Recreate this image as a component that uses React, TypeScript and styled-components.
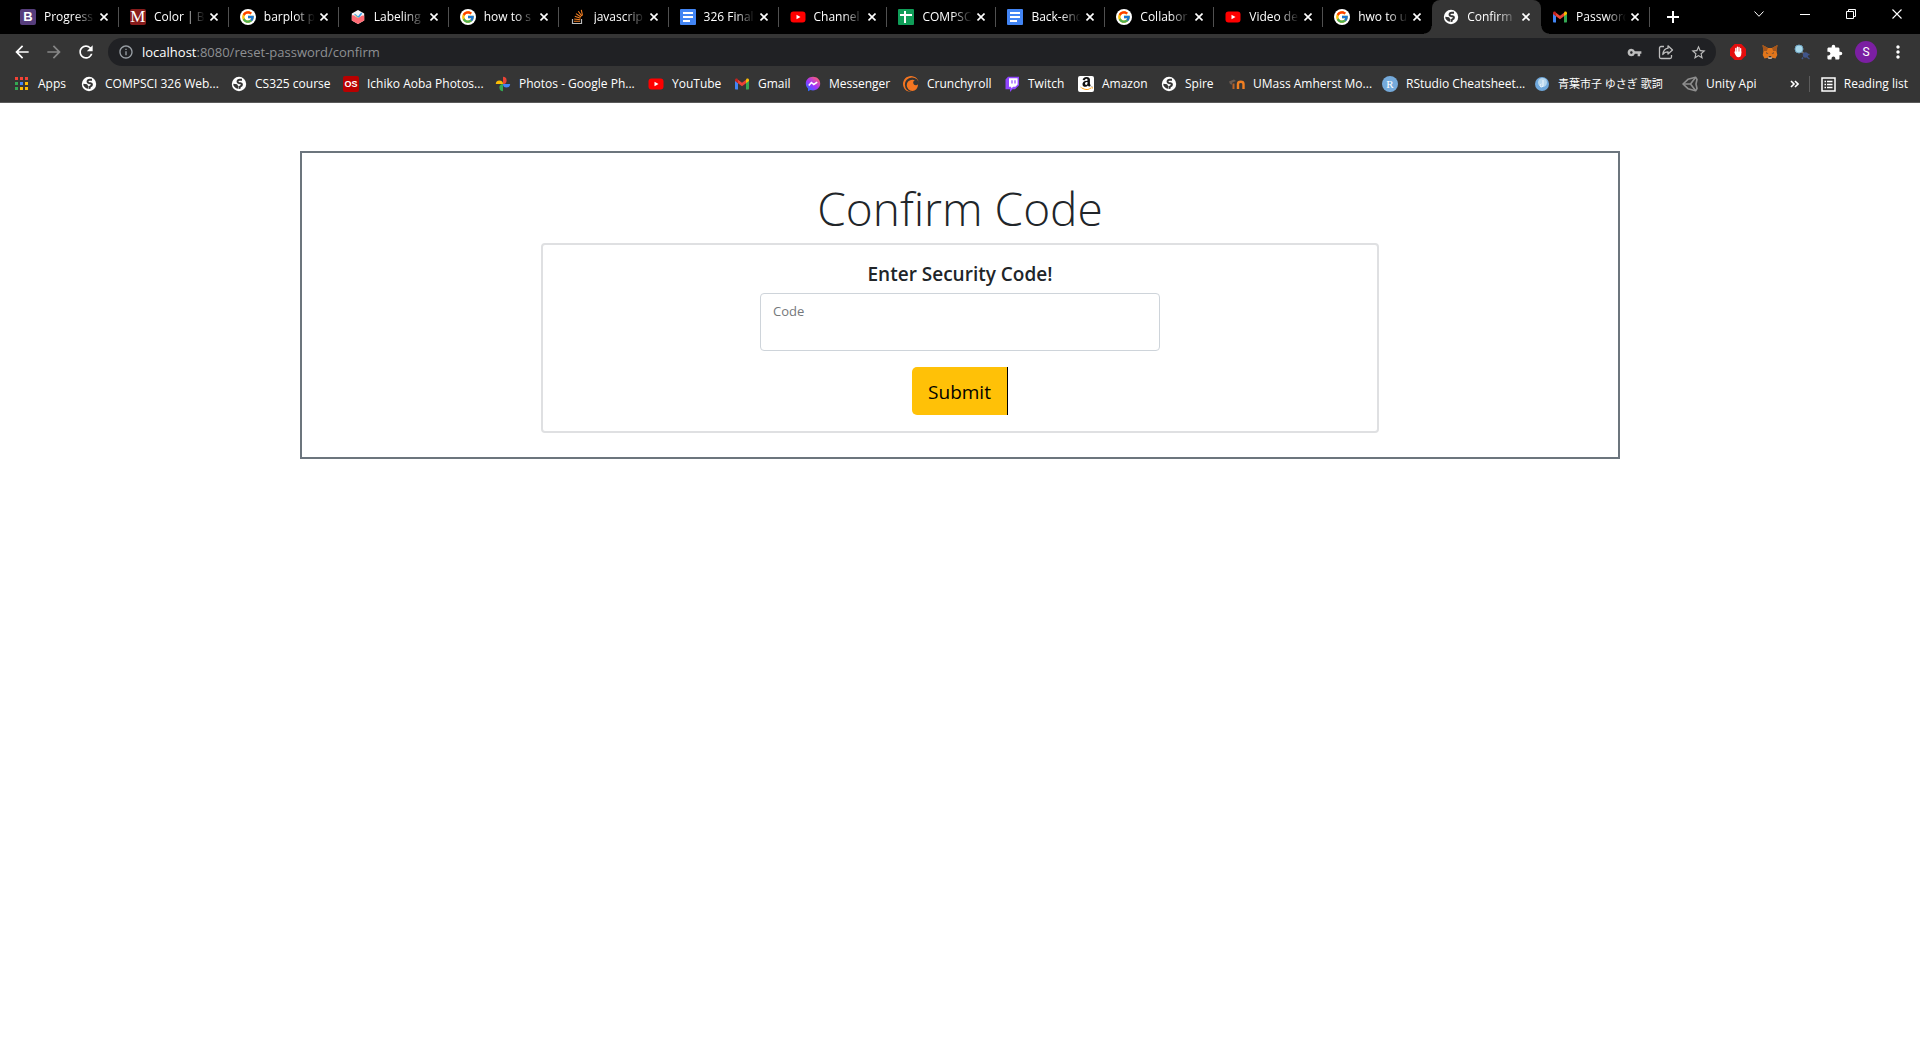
import React from 'react';
import styled, { createGlobalStyle } from 'styled-components';
import { FcGoogle } from 'react-icons/fc';
import { FaAmazon } from 'react-icons/fa';
import {
  MdArrowBack,
  MdArrowForward,
  MdExtension,
  MdInfoOutline,
  MdMoreVert,
  MdRefresh,
  MdStarBorder,
  MdVpnKey,
} from 'react-icons/md';
import { SiCrunchyroll } from 'react-icons/si';

const GlobalStyle = createGlobalStyle`
  *, *::before, *::after { box-sizing: border-box; }
  body {
    margin: 0;
    background: #fff;
    color: #212529;
    font-family: "Open Sans", "Noto Sans", "Noto Sans CJK JP", sans-serif;
    font-size: 16px;
  }
  button { font-family: inherit; border: 0; padding: 0; background: none; color: inherit; }
  svg { display: block; flex: none; }
`;

/* ---------- browser chrome ---------- */

const Chrome = styled.header`
  background: #353535;
  color: #fff;
  font-size: 12px;
  border-bottom: 1px solid #5a5a5a;
`;

const TabStrip = styled.div`
  display: flex;
  height: 34px;
  padding-left: 9px;
  background: #000;
`;

const Tabs = styled.div`
  display: grid;
  flex: 1;
  grid-template-columns: repeat(7, minmax(0, 110fr)) repeat(8, minmax(0, 109fr));
  min-width: 0;
`;

const Tab = styled.div<{ $active?: boolean; $divider?: boolean }>`
  display: flex;
  min-width: 0;
  align-items: center;
  padding: 0 10px 0 11px;
  position: relative;
  background: ${(p) => (p.$active ? '#353535' : 'transparent')};
  border-radius: 8px 8px 0 0;

  &::before, &::after {
    content: '';
    display: ${(p) => (p.$active ? 'block' : 'none')};
    position: absolute;
    bottom: 0;
    width: 8px;
    height: 8px;
  }
  &::before {
    left: -8px;
    background: radial-gradient(circle at 0 0, transparent 7px, #353535 8px);
  }
  &::after {
    right: -8px;
    background: radial-gradient(circle at 100% 0, transparent 7px, #353535 8px);
  }
  ${(p) =>
    p.$divider &&
    `&::after {
      display: block;
      right: 0;
      bottom: 7px;
      width: 1px;
      height: 20px;
      background: #505050;
    }`}
`;

const TabTitle = styled.span`
  flex: 1;
  min-width: 0;
  margin: 0 4px 0 8px;
  overflow: hidden;
  white-space: nowrap;
  line-height: 18px;
  mask-image: linear-gradient(to right, #000 60%, transparent);
`;

const CloseButton = styled.button`
  display: flex;
  width: 10px;
  height: 16px;
  align-items: center;
  justify-content: center;
`;

const StripButton = styled.button`
  display: flex;
  width: 46px;
  align-items: center;
  justify-content: center;
`;

const WindowControls = styled.div`
  display: flex;
  height: 28px;
  margin-left: 40px;
`;

const Toolbar = styled.div`
  display: flex;
  align-items: center;
  height: 36px;
  padding: 0 6px;
`;

const ToolButton = styled.button<{ $dim?: boolean }>`
  display: flex;
  width: 32px;
  height: 28px;
  align-items: center;
  justify-content: center;
  color: ${(p) => (p.$dim ? '#868686' : '#fff')};
`;

const Omnibox = styled.div`
  display: flex;
  flex: 1;
  align-items: center;
  height: 28px;
  margin: 0 6px;
  padding: 0 2px 0 10px;
  border-radius: 14px;
  background: #202124;
  color: #bdbdbd;
`;

const Url = styled.div`
  flex: 1;
  padding-left: 8px;
  font-size: 13px;
  line-height: 20px;
  color: #8e9093;
  b { font-weight: 400; color: #fff; }
`;

const Avatar = styled.span`
  display: flex;
  width: 22px;
  height: 22px;
  align-items: center;
  justify-content: center;
  border-radius: 50%;
  background: #7b1fa2;
  font-family: Roboto, sans-serif;
  font-size: 12px;
`;

const BookmarkBar = styled.nav`
  display: flex;
  align-items: center;
  height: 32px;
  padding: 0 12px 4px 14px;
`;

const BookmarkLink = styled.a`
  display: flex;
  align-items: center;
  gap: 8px;
  margin-right: 17px;
  color: #fff;
  text-decoration: none;
  white-space: nowrap;
`;

const BookmarkLabel = styled.span<{ $width: number; $cjk?: boolean }>`
  width: ${(p) => p.$width}px;
  font-size: ${(p) => (p.$cjk ? 11 : 12)}px;
  line-height: 18px;
`;

const BarEnd = styled.div`
  display: flex;
  align-items: center;
  margin-left: auto;
`;

const BarDivider = styled.span`
  width: 1px;
  height: 16px;
  margin: 0 11px 0 10px;
  background: #5c5c5c;
`;

const ReadingList = styled.button`
  display: flex;
  align-items: center;
  gap: 8px;
  font-size: 12px;
  line-height: 18px;
  white-space: nowrap;
`;

/* ---------- page ---------- */

const Page = styled.main`
  padding: 48px 24px;
`;

const Container = styled.section`
  display: flex;
  flex-direction: column;
  align-items: center;
  max-width: 1320px;
  margin: 0 auto;
  padding: 28px 0 24px;
  border: 2px solid #6c757d;
`;

const Title = styled.h1`
  margin: 0 0 8px;
  font-size: 46px;
  font-weight: 300;
  line-height: 54px;
`;

const Column = styled.div`
  width: 66.6667%;
  padding: 0 20px;
`;

const Form = styled.form`
  display: flex;
  flex-direction: column;
  align-items: center;
  padding: 16px;
  border: 2px solid #dfe0e2;
  border-radius: 4px;
`;

const FormHeading = styled.h2`
  margin: 0 0 6px;
  font-size: 19px;
  font-weight: 600;
  line-height: 26px;
`;

const Field = styled.div`
  position: relative;
  width: 100%;
  max-width: 400px;
  margin-bottom: 16px;
`;

const FieldLabel = styled.label`
  position: absolute;
  top: 8px;
  left: 13px;
  font-size: 13px;
  line-height: 20px;
  color: #75787b;
`;

const FieldInput = styled.input`
  display: block;
  width: 100%;
  height: 58px;
  padding: 26px 12px 10px;
  border: 1px solid #ced4da;
  border-radius: 4px;
  background: #fff;
  color: #212529;
  font: inherit;
`;

const SubmitButton = styled.button`
  height: 48px;
  padding: 2px 16px 0;
  border-right: 1px solid #000;
  border-radius: 5px 0 0 5px;
  background: #ffc107;
  color: #000;
  font-size: 19px;
  line-height: 30px;
`;

/* ---------- icons ---------- */

const Globe = () => (
  <svg width="16" height="16" viewBox="0 0 16 16">
    <circle cx="8" cy="8" r="7.2" fill="#fff" />
    <path
      d="M11 3.8H9C6.200 3.600 5.800 6.400 7.800 6.900L9.500 7.200C11.600 7.600 11.200 9.800 9.600 10.200 8.600 10.500 8.600 11.500 8.400 12.800"
      stroke="#353535"
      strokeWidth="2"
      fill="none"
    />
    <path d="M2.200 7.800L6 8.300 7.400 10.200 7 12.800 5 12.200C3.400 11.200 2.400 9.800 2.200 7.800z" fill="#353535" />
  </svg>
);

const GoogleIcon = () => (
  <svg width="16" height="16" viewBox="0 0 16 16">
    <circle cx="8" cy="8" r="8" fill="#fff" />
    <FcGoogle x="1" y="1" size={14} />
  </svg>
);

const YouTube = () => (
  <svg width="16" height="16" viewBox="0 0 16 16">
    <rect x="0.5" y="2.5" width="15" height="11" rx="3" fill="#f00" />
    <path d="M6.5 5.7v4.6L10.5 8z" fill="#fff" />
  </svg>
);

const GmailIcon = () => (
  <svg width="16" height="16" viewBox="0 0 16 16">
    <path d="M1 4.5v8.3c0 .4.3.7.7.7H4V7z" fill="#4285f4" />
    <path d="M15 4.5v8.3c0 .4-.3.7-.7.7H12V7z" fill="#34a853" />
    <path d="M12 3.8V7.2l3-2.2V4c0-1.5-1.6-2-2.5-1.2z" fill="#fbbc04" />
    <path d="M4 3.8L8 6.8l4-3v3.4L8 10.3 4 7.2z" fill="#ea4335" />
    <path d="M1 4v1l3 2.2V3.8L3.5 2.8C2.5 2 1 2.5 1 4z" fill="#c5221f" />
  </svg>
);

const DocIcon = () => (
  <svg width="16" height="16" viewBox="0 0 16 16">
    <rect width="16" height="16" rx="1" fill="#4285f4" />
    <path d="M3 4h10M3 8h10M3 12h7" stroke="#fff" strokeWidth="2" />
  </svg>
);

const SheetIcon = () => (
  <svg width="16" height="16" viewBox="0 0 16 16">
    <rect width="16" height="16" rx="1" fill="#0f9d58" />
    <path d="M2 6h12M7 2v12" stroke="#fff" strokeWidth="2" />
  </svg>
);

const LetterTile = styled.span<{ $bg: string; $size: number; $serif?: boolean; $round?: boolean; $bold?: boolean }>`
  display: flex;
  flex: none;
  width: 16px;
  height: 16px;
  align-items: center;
  justify-content: center;
  border-radius: ${(p) => (p.$round ? '50%' : '2px')};
  background: ${(p) => p.$bg};
  color: #fff;
  font-family: ${(p) => (p.$serif ? '"Liberation Serif", serif' : '"Liberation Sans", sans-serif')};
  font-size: ${(p) => p.$size}px;
  font-weight: ${(p) => (p.$bold ? 700 : 400)};
  line-height: 16px;
`;

const ChartIcon = () => (
  <svg width="16" height="16" viewBox="0 0 16 16">
    <path d="M8 1l6.2 3.500v7L8 15l-6.200-3.500v-7z" fill="#f4f4f4" />
    <path d="M1.800 6.500C4 5 5.500 8.500 8 8.500S11.500 5.500 14.200 6.800v4.700L8 15l-6.200-3.500z" fill="#ff6b74" />
    <path d="M4.500 5.500C6 5.500 6.500 8 8 8s2.500-3.500 3.800-3.800" stroke="#36a2eb" strokeWidth="1.600" fill="none" />
    <path d="M5 6.500C6.300 6.500 7 8.700 8.300 8.700" stroke="#ffcd56" strokeWidth="1" fill="none" />
  </svg>
);

const StackIcon = () => (
  <svg width="16" height="16" viewBox="0 0 16 16">
    <path d="M2.500 10v4.500h9V10" stroke="#bcbbbb" strokeWidth="1.200" fill="none" />
    <path d="M4 12.300h6M4.200 10l6 .7M4.800 7.300l5.700 1.900M6 4.600l5 3.400M8.300 2.300l3.500 4.800M11.300.8l1.200 5.700" stroke="#f48024" strokeWidth="1.100" />
  </svg>
);

const AppsIcon = () => {
  const colors = ['#f44336', '#f44336', '#f44336', '#34a853', '#4285f4', '#fbbc04', '#34a853', '#fbbc04', '#fbbc04'];
  return (
    <svg width="16" height="16" viewBox="0 0 16 16">
      {colors.map((c, i) => (
        <rect key={i} x={1 + (i % 3) * 5} y={1 + Math.floor(i / 3) * 5} width="3" height="3" fill={c} />
      ))}
    </svg>
  );
};

const PhotosIcon = () => (
  <svg width="16" height="16" viewBox="0 0 16 16">
    <path d="M8 .8a3.600 3.600 0 0 1 0 7.200z" fill="#ea4335" />
    <path d="M15.200 8a3.600 3.600 0 0 1-7.200 0z" fill="#4285f4" />
    <path d="M8 15.200a3.600 3.600 0 0 1 0-7.200z" fill="#34a853" />
    <path d="M.8 8a3.600 3.600 0 0 1 7.200 0z" fill="#fbbc04" />
  </svg>
);

const MessengerIcon = () => (
  <svg width="16" height="16" viewBox="0 0 16 16">
    <defs>
      <linearGradient id="messenger" x1="0" y1="1" x2="0.8" y2="0">
        <stop offset="0" stopColor="#0a7cff" />
        <stop offset="0.5" stopColor="#a033ff" />
        <stop offset="1" stopColor="#ff6070" />
      </linearGradient>
    </defs>
    <path d="M8 .8C3.900.8.8 3.700.8 7.600c0 2 .8 3.800 2.200 5v2.600l2.400-1.200c.8.200 1.700.4 2.600.4 4.100 0 7.200-2.900 7.200-6.800S12.100.8 8 .8z" fill="url(#messenger)" />
    <path d="M3.800 9.500L6.400 6.500l2.400 2 3.400-2.300" stroke="#fff" strokeWidth="1.600" fill="none" />
  </svg>
);

const AmazonIcon = () => (
  <svg width="16" height="16" viewBox="0 0 16 16">
    <defs>
      <linearGradient id="amazon" x1="0" y1="0" x2="0" y2="1">
        <stop offset="0.73" stopColor="#111" />
        <stop offset="0.74" stopColor="#f90" />
      </linearGradient>
    </defs>
    <rect width="16" height="16" rx="2" fill="#fff" />
    <FaAmazon x="1" y="0" size={15} fill="url(#amazon)" />
  </svg>
);

const TwitchIcon = () => (
  <svg width="16" height="16" viewBox="0 0 16 16">
    <path d="M4 0.8h11v8.500l-4 4H8.500L6 16v-2.700H1.500V3.500z" fill="#9146ff" />
    <path d="M5 2.200h8.600v6.400l-2.200 2.200H9.200L7.200 12.600v-1.800H5z" fill="#fff" />
    <path d="M8 4.300v3.200M11 4.300v3.200" stroke="#9146ff" strokeWidth="1.200" />
  </svg>
);

const MoodleIcon = () => (
  <svg width="16" height="16" viewBox="0 0 16 16">
    <path d="M0 5.500l5-2 2 1.500-4 1.700v2L1 8z" fill="#6a5a50" />
    <path d="M4.500 13V7.500" stroke="#b9622a" strokeWidth="2" />
    <path d="M9 13V8c0-3 5.500-3 5.500 0v5" stroke="#f07f22" strokeWidth="2.400" fill="none" />
  </svg>
);

const OrbIcon = () => (
  <svg width="16" height="16" viewBox="0 0 16 16">
    <circle cx="8" cy="8" r="7" fill="#6fa8dc" />
    <circle cx="8.500" cy="6.500" r="4.500" fill="#b7d7ee" />
    <path d="M9 4v5a1.500 1.500 0 1 1-1.500-1" stroke="#eef7ff" strokeWidth="1" fill="none" />
  </svg>
);

const UnityIcon = () => (
  <svg width="16" height="16" viewBox="0 0 16 16" fill="none" stroke="#8f8f8f" strokeWidth="1.600" strokeLinejoin="round">
    <path d="M1 8L6 3.300 13.600 1.200 15 3.500 14 8l1 4.500-1.400 2.300L6 12.700z" />
    <path d="M1.500 8H8.500M8.500 8L13.500 1.500M8.500 8l5 6.500" />
  </svg>
);

const ShareIcon = () => (
  <svg width="16" height="16" viewBox="0 0 16 16" fill="none" stroke="#bdbdbd" strokeWidth="1.300" strokeLinejoin="round">
    <path d="M6 2.500H3A1.500 1.500 0 0 0 1.500 4v9A1.500 1.500 0 0 0 3 14.500h9a1.500 1.500 0 0 0 1.500-1.500v-2" />
    <path d="M10 1.800L14.500 6 10 10V7.800C7.500 7.800 6 8.600 4.800 10.500 5.200 7.200 7 4.600 10 4.200z" />
  </svg>
);

const BlockerIcon = () => (
  <svg width="16" height="16" viewBox="0 0 16 16">
    <path d="M4.700 0h6.600L16 4.700v6.600L11.300 16H4.700L0 11.300V4.700z" fill="#e40d0d" />
    <path d="M5.800 8V4.500M7.400 7.500V3.200M9 7.500V3.400M10.600 8.500V4.600" stroke="#fff" strokeWidth="1.300" strokeLinecap="round" />
    <path d="M4.200 7.800L5.200 7.500h6.100V10c0 2-1.200 3.300-2.900 3.300S5.400 11.500 4.200 7.800z" fill="#fff" />
  </svg>
);

const FoxIcon = () => (
  <svg width="16" height="16" viewBox="0 0 16 16">
    <path d="M.5 1L6 4h4l5.500-3-1 6 .8 4-1.800 3.500-3-.7L9 15H7l-1.500-1.200-3 .7L.7 11l.8-4z" fill="#e2761b" />
    <path d="M.5 1L6 4 4.800 7 1.500 7zM15.500 1L10 4l1.200 3 3.300 0z" fill="#a4561c" />
    <path d="M4 8.200l2.500 1.400H4.500zM12 8.200L9.500 9.600h2z" fill="#233447" />
    <path d="M6.200 12.500h3.600l.4 1.500L9 15H7l-1.200-1z" fill="#c0ad9e" />
    <path d="M6.800 12.200h2.400l.3 1h-3z" fill="#161616" />
  </svg>
);

const LensIcon = () => (
  <svg width="16" height="16" viewBox="0 0 16 16">
    <circle cx="5" cy="5" r="4" fill="#a8d8ea" stroke="#6fa3c0" strokeWidth="1" />
    <path d="M8 8l2.500 2" stroke="#777" strokeWidth="1.500" />
    <circle cx="11.500" cy="11" r="2.700" fill="#41558a" />
    <path d="M9 13.500l-1 1.500M13 13l2.500 2M13.500 10.500h2" stroke="#41558a" strokeWidth="1.400" />
  </svg>
);

const CloseIcon = ({ size = 8, weight = 1.6 }: { size?: number; weight?: number }) => (
  <svg width={size} height={size} viewBox={`0 0 ${size} ${size}`}>
    <path d={`M.5.5L${size - 0.5} ${size - 0.5}M${size - 0.5} .5L.5 ${size - 0.5}`} stroke="#fff" strokeWidth={weight} />
  </svg>
);

const ListIcon = () => (
  <svg width="15" height="15" viewBox="0 0 15 15" fill="none" stroke="#fff">
    <rect x="1" y="1" width="13" height="13" strokeWidth="1.500" />
    <path d="M3.500 4.500h1.500M6 4.500h5.500M3.500 7.500h1.500M6 7.500h5.500M3.500 10.500h1.500M6 10.500h5.500" strokeWidth="1.400" />
  </svg>
);

/* ---------- data ---------- */

const tabs: { icon: React.ReactNode; title: string; active?: boolean; beforeActive?: boolean }[] = [
  { icon: <LetterTile $bg="#563d7c" $size={13} $bold>B</LetterTile>, title: 'Progress' },
  { icon: <LetterTile $bg="#881c1c" $size={17} $serif>M</LetterTile>, title: 'Color | B' },
  { icon: <GoogleIcon />, title: 'barplot p' },
  { icon: <ChartIcon />, title: 'Labeling' },
  { icon: <GoogleIcon />, title: 'how to s' },
  { icon: <StackIcon />, title: 'javascrip' },
  { icon: <DocIcon />, title: '326 Final' },
  { icon: <YouTube />, title: 'Channel' },
  { icon: <SheetIcon />, title: 'COMPSC' },
  { icon: <DocIcon />, title: 'Back-end' },
  { icon: <GoogleIcon />, title: 'Collabor' },
  { icon: <YouTube />, title: 'Video de' },
  { icon: <GoogleIcon />, title: 'hwo to u', beforeActive: true },
  { icon: <Globe />, title: 'Confirm', active: true },
  { icon: <GmailIcon />, title: 'Password' },
];

const bookmarks: { icon: React.ReactNode; label: string; width: number; cjk?: boolean }[] = [
  { icon: <AppsIcon />, label: 'Apps', width: 26 },
  { icon: <Globe />, label: 'COMPSCI 326 Web...', width: 109 },
  { icon: <Globe />, label: 'CS325 course', width: 71 },
  { icon: <LetterTile $bg="#b90000" $size={9} $bold>OS</LetterTile>, label: 'Ichiko Aoba Photos...', width: 111 },
  { icon: <PhotosIcon />, label: 'Photos - Google Ph...', width: 112 },
  { icon: <YouTube />, label: 'YouTube', width: 45 },
  { icon: <GmailIcon />, label: 'Gmail', width: 30 },
  { icon: <MessengerIcon />, label: 'Messenger', width: 57 },
  { icon: <SiCrunchyroll size={16} color="#f47521" />, label: 'Crunchyroll', width: 60 },
  { icon: <TwitchIcon />, label: 'Twitch', width: 33 },
  { icon: <AmazonIcon />, label: 'Amazon', width: 42 },
  { icon: <Globe />, label: 'Spire', width: 27 },
  { icon: <MoodleIcon />, label: 'UMass Amherst Mo...', width: 112 },
  { icon: <LetterTile $bg="#75aadb" $size={11} $serif $round>R</LetterTile>, label: 'RStudio Cheatsheet...', width: 111 },
  { icon: <OrbIcon />, label: '青葉市子 ゆさぎ 歌詞', width: 107, cjk: true },
  { icon: <UnityIcon />, label: 'Unity Api', width: 49 },
];

export default function App() {
  return (
    <>
      <GlobalStyle />
      <Chrome>
        <TabStrip>
          <Tabs>
            {tabs.map((t, i) => (
              <Tab key={i} $active={t.active} $divider={!t.active && !t.beforeActive}>
                {t.icon}
                <TabTitle>{t.title}</TabTitle>
                <CloseButton aria-label="Close tab"><CloseIcon /></CloseButton>
              </Tab>
            ))}
          </Tabs>
          <StripButton aria-label="New tab">
            <svg width="12" height="12" viewBox="0 0 12 12"><path d="M6 0v12M0 6h12" stroke="#fff" strokeWidth="2" /></svg>
          </StripButton>
          <WindowControls>
            <StripButton aria-label="Search tabs">
              <svg width="10" height="6" viewBox="0 0 10 6"><path d="M.5.5L5 5.300 9.500.5" stroke="#fff" fill="none" /></svg>
            </StripButton>
            <StripButton aria-label="Minimize">
              <svg width="10" height="2" viewBox="0 0 10 2"><path d="M0 1.500h10" stroke="#fff" /></svg>
            </StripButton>
            <StripButton aria-label="Restore">
              <svg width="10" height="10" viewBox="0 0 10 10"><path d="M.5 2.500h7v7h-7zM2.500 2.500v-2h7v7h-2" stroke="#fff" fill="none" /></svg>
            </StripButton>
            <StripButton aria-label="Close window"><CloseIcon size={10} weight={1.1} /></StripButton>
          </WindowControls>
        </TabStrip>

        <Toolbar>
          <ToolButton aria-label="Back"><MdArrowBack size={20} /></ToolButton>
          <ToolButton aria-label="Forward" $dim><MdArrowForward size={20} /></ToolButton>
          <ToolButton aria-label="Reload"><MdRefresh size={20} /></ToolButton>
          <Omnibox>
            <MdInfoOutline size={16} color="#9aa0a6" />
            <Url><b>localhost</b>:8080/reset-password/confirm</Url>
            <ToolButton aria-label="Passwords"><MdVpnKey size={15} color="#bdbdbd" /></ToolButton>
            <ToolButton aria-label="Share"><ShareIcon /></ToolButton>
            <ToolButton aria-label="Bookmark this page"><MdStarBorder size={17} color="#bdbdbd" /></ToolButton>
          </Omnibox>
          <ToolButton aria-label="Content blocker"><BlockerIcon /></ToolButton>
          <ToolButton aria-label="Wallet"><FoxIcon /></ToolButton>
          <ToolButton aria-label="Inspector"><LensIcon /></ToolButton>
          <ToolButton aria-label="Extensions"><MdExtension size={17} /></ToolButton>
          <ToolButton aria-label="Profile"><Avatar>S</Avatar></ToolButton>
          <ToolButton aria-label="Menu"><MdMoreVert size={20} /></ToolButton>
        </Toolbar>

        <BookmarkBar>
          {bookmarks.map((b) => (
            <BookmarkLink key={b.label} href="#">
              {b.icon}
              <BookmarkLabel $width={b.width} $cjk={b.cjk}>{b.label}</BookmarkLabel>
            </BookmarkLink>
          ))}
          <BarEnd>
            <button aria-label="More bookmarks">
              <svg width="9" height="8" viewBox="0 0 9 8"><path d="M1 1l3 3-3 3M5 1l3 3-3 3" stroke="#fff" strokeWidth="1.600" fill="none" /></svg>
            </button>
            <BarDivider />
            <ReadingList><ListIcon />Reading list</ReadingList>
          </BarEnd>
        </BookmarkBar>
      </Chrome>

      <Page>
        <Container>
          <Title>Confirm Code</Title>
          <Column>
            <Form onSubmit={(e) => e.preventDefault()}>
              <FormHeading>Enter Security Code!</FormHeading>
              <Field>
                <FieldInput id="code" type="text" />
                <FieldLabel htmlFor="code">Code</FieldLabel>
              </Field>
              <SubmitButton type="submit">Submit</SubmitButton>
            </Form>
          </Column>
        </Container>
      </Page>
    </>
  );
}
